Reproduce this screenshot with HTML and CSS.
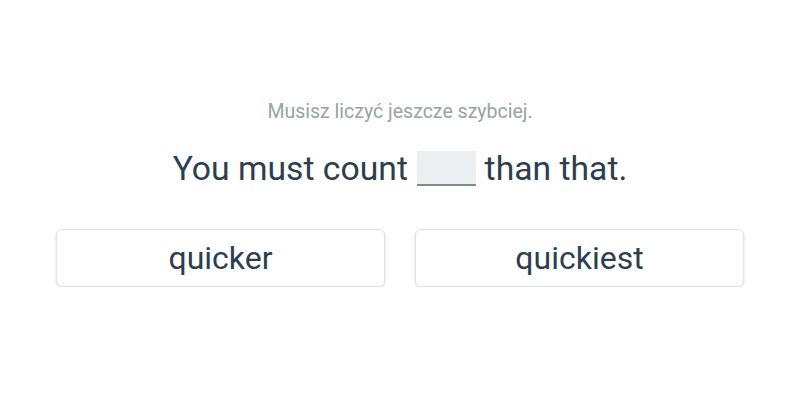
FILE: index.html
```html
<!DOCTYPE html>
<html lang="en">
<head>
    <meta charset="UTF-8">
    <title>Quiz</title>
    <link rel="stylesheet" href="styles.css">
</head>
<body>
    <div class="quiz">
        <p class="hint">Musisz liczyć jeszcze szybciej.</p>
        <p class="sentence">You must count <span class="blank"></span> than that.</p>
        <div class="answers">
            <button class="answer">quicker</button>
            <button class="answer">quickiest</button>
        </div>
    </div>
</body>
</html>
```

FILE: styles.css
```css
/* General */
body {
    margin: 0;
    background-color: #fff;
    font-family: Roboto, "Noto Sans", sans-serif;
    color: #2c3e50;
}
.quiz {
    width: 688px;
    margin: 0 auto;
    padding-top: 101px;
    text-align: center;
}

/* Sentence */
.hint {
    margin: 0;
    font-size: 19.5px;
    line-height: 22px;
    color: #95a5a6;
}
.sentence {
    margin: 22px 0 0;
    font-size: 33.7px;
    line-height: 48px;
}
.blank {
    display: inline-block;
    width: 59px;
    height: 33px;
    margin-left: 1px;
    vertical-align: -6px;
    background-color: #eceff1;
    border-bottom: 2px solid #7f8c8d;
}

/* Answers */
.answers {
    display: flex;
    gap: 30px;
    margin-top: 36px;
}
.answer {
    flex: 1;
    height: 58px;
    background-color: #fff;
    border: 1px solid #e0e3e5;
    border-radius: 6px;
    box-shadow: 0 1px 3px rgba(0, 0, 0, 0.14);
    font-family: inherit;
    font-size: 32px;
    color: #2c3e50;
    cursor: pointer;
}
```
